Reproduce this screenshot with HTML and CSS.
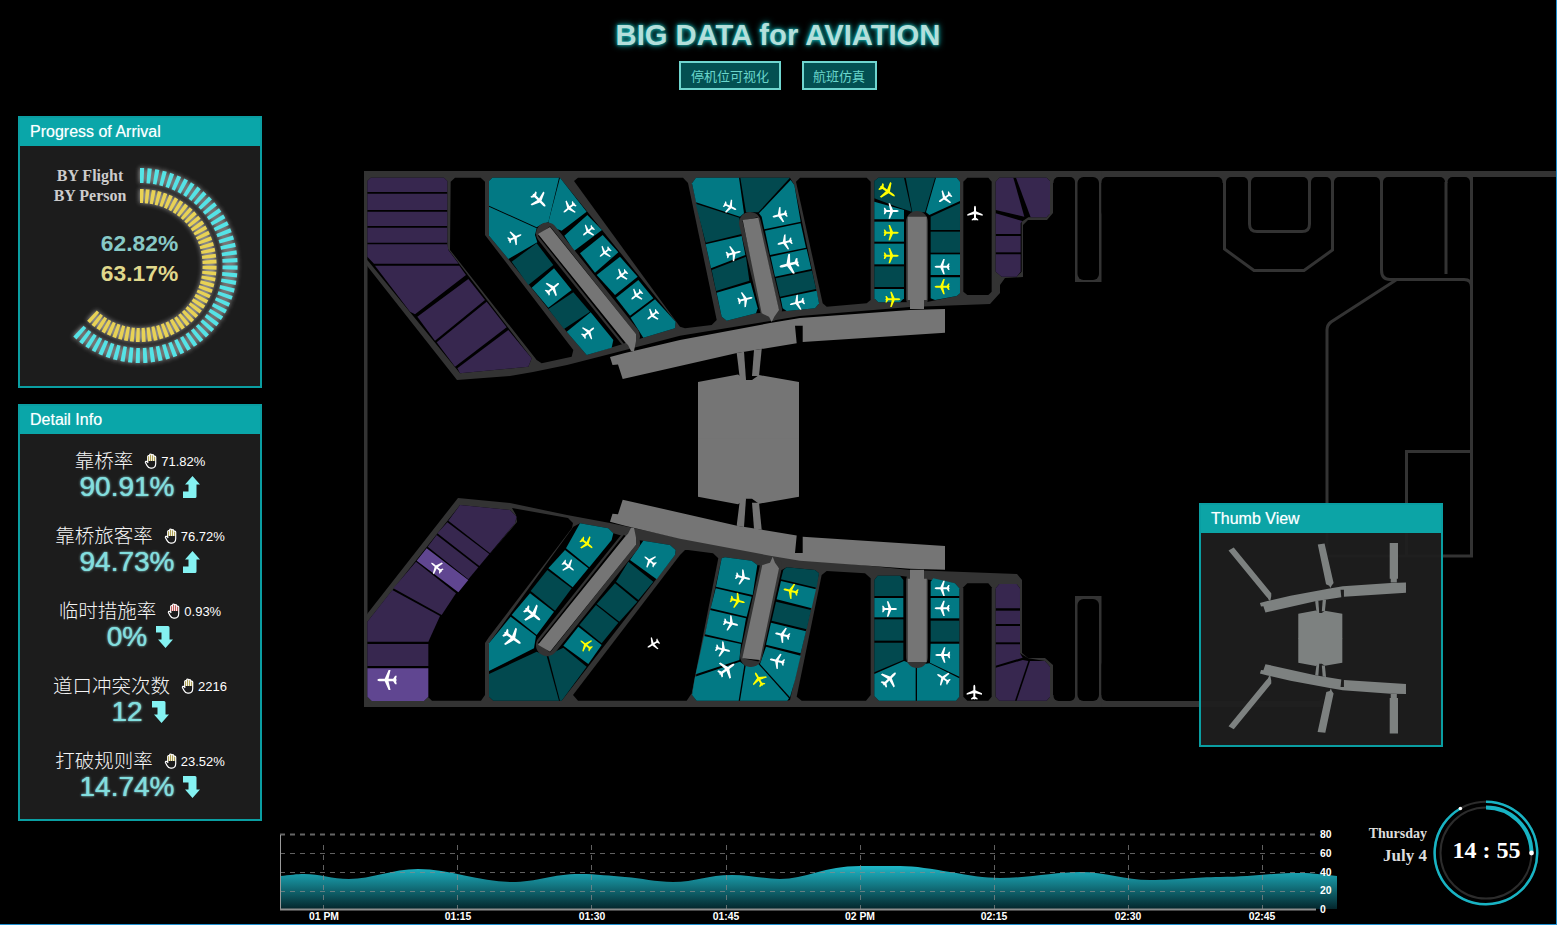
FILE: index.html
```html
<!DOCTYPE html>
<html>
<head>
  <meta charset="utf-8"/>
  <title>BIG DATA for AVIATION</title>
  <link rel="stylesheet" href="styles.css">
</head>
<body>

<svg class="defs" width="0" height="0">
  <defs>
    <path id="plane" d="M0-10C.9-10 1.3-8.4 1.3-6.5V-2.6L10 1.3V3.2L1.3 1.2V5.8L4.2 7.8V9.4L.8 8.7 0 9.8-.8 8.7-4.2 9.4V7.8L-1.3 5.8V1.2L-10 3.2V1.3L-1.3-2.6V-6.5C-1.3-8.4-.9-10 0-10Z"/>
    <path id="arrowUp" d="M9.5 0 17 8.5H13.5V20.5Q13.5 22 12 22H0V15.5H5.5V8.5H2Z"/>
    <path id="arrowDown" d="M9.5 22 17 13.5H13.5V1.5Q13.5 0 12 0H0V6.5H5.5V13.5H2Z"/>
    <g id="hand">
      <path class="hand-tips" d="M3.2 8V3.5a1 1 0 0 1 2 0V2a1 1 0 0 1 2 0v.6a1 1 0 0 1 2 0V4a1 1 0 0 1 2 0V8Z"/>
      <path class="hand-line" d="M3.2 9V3.5a1 1 0 0 1 2 0V8M5.2 7V2a1 1 0 0 1 2 0V8M7.2 8V2.6a1 1 0 0 1 2 0V8M9.2 8V4a1 1 0 0 1 2 0V10.5C11.2 13.5 9.8 15.2 7.4 15.2H6.2C4.4 15.2 3.4 14 2.6 12.6L1 9.8C.4 8.5 2.2 7.6 3.2 9.2L3.6 10"/>
    </g>

    <g id="half">
      <polygon points="610,357 625,353 680,340 770,323 800,318 910,310 945,309 945,332.7 802.7,342 802.7,325.7 795,325.7 796.7,343.3 737,353 622.7,379 618,364.5 612.5,365"/>
      <polygon points="736.7,353 744,351.7 746,380 740,380"/>
      <polygon points="754,350 761.7,349 759,376 752,376"/>
      <polygon points="698,382 738,374.5 746,380 752,380 759,375 799,382 799,440 698,440"/>
      <polygon points="538,234 550,227 636,334 636,341 634,351 631,351 628,345 625,342"/>
      <polygon points="907.7,216.7 926.7,216.7 926.7,300 924,300 924,309 910,309 910,300 907.7,300"/>
    </g>
    <g id="terminal">
      <use href="#half"/>
      <use href="#half" transform="matrix(1 0 0 -1 0 878.7)"/>
      <polygon points="742.7,220 758.3,217.7 779,310 774.3,316.7 771.7,322 769,316.7 761.7,313.3"/>
      <polygon points="762.3,565 770,562.7 772.7,556.7 775,562.7 779,568.3 760,660 742.3,658.3"/>
    </g>
  </defs>
</svg>

<div class="page">
  <header class="top">
    <h1 class="title">BIG DATA for AVIATION</h1>
    <nav class="tabs">
      <button class="tab">停机位可视化</button>
      <button class="tab">航班仿真</button>
    </nav>
  </header>

  <div class="main">
    <aside class="side">
      <section class="panel">
        <h2 class="panel-head">Progress of Arrival</h2>
        <svg class="gauge" viewBox="20 146 240 240">
          <path class="ring ring-flight" d="M140 175.5A90 90 0 1 1 76.4 329.1"/>
          <path class="ring ring-person" d="M140 196A69.5 69.5 0 1 1 90.9 314.6"/>
          <text class="gauge-label" x="90" y="181">BY Flight</text>
          <text class="gauge-label" x="90" y="201">BY Person</text>
          <text class="gauge-num num-flight" x="139.5" y="250.5">62.82%</text>
          <text class="gauge-num num-person" x="139.5" y="280.5">63.17%</text>
        </svg>
      </section>

      <section class="panel">
        <h2 class="panel-head">Detail Info</h2>
        <div class="stats">
          <div class="stat">
            <div class="stat-top"><span class="stat-name">靠桥率</span><svg class="hand" viewBox="0 0 13 16"><use href="#hand"/></svg><span class="stat-ref">71.82%</span></div>
            <div class="stat-big">90.91%<svg class="arrow" viewBox="0 0 17 22"><use href="#arrowUp"/></svg></div>
          </div>
          <div class="stat">
            <div class="stat-top"><span class="stat-name">靠桥旅客率</span><svg class="hand" viewBox="0 0 13 16"><use href="#hand"/></svg><span class="stat-ref">76.72%</span></div>
            <div class="stat-big">94.73%<svg class="arrow" viewBox="0 0 17 22"><use href="#arrowUp"/></svg></div>
          </div>
          <div class="stat">
            <div class="stat-top"><span class="stat-name">临时措施率</span><svg class="hand hand-red" viewBox="0 0 13 16"><use href="#hand"/></svg><span class="stat-ref">0.93%</span></div>
            <div class="stat-big">0%<svg class="arrow" viewBox="0 0 17 22"><use href="#arrowDown"/></svg></div>
          </div>
          <div class="stat">
            <div class="stat-top"><span class="stat-name">道口冲突次数</span><svg class="hand" viewBox="0 0 13 16"><use href="#hand"/></svg><span class="stat-ref">2216</span></div>
            <div class="stat-big">12<svg class="arrow" viewBox="0 0 17 22"><use href="#arrowDown"/></svg></div>
          </div>
          <div class="stat">
            <div class="stat-top"><span class="stat-name">打破规则率</span><svg class="hand" viewBox="0 0 13 16"><use href="#hand"/></svg><span class="stat-ref">23.52%</span></div>
            <div class="stat-big">14.74%<svg class="arrow" viewBox="0 0 17 22"><use href="#arrowDown"/></svg></div>
          </div>
        </div>
      </section>
    </aside>

    <section class="stage">
      <svg class="map" viewBox="364 168 1193 540">
        <!-- apron, top and bottom -->
        <g class="apron">
          <rect x="364" y="171" width="1193" height="6"/>
          <rect x="364" y="171" width="3.5" height="536"/>
          <rect x="364" y="701" width="959" height="6"/>
          <polygon points="364,171 1053,171 1053,213 1047,220 1028,220 1023,225 1023,277 1005,278 1000,285 1000,293 990,304 910,307 800,316 770,321 680,335.7 610,354 567,365 533,372 510,376 457,380 364,262"/>
          <polygon points="364,707 1053,707 1053,665 1045,658 1028,658 1022,653 1022,580 1017,574 910,570 793,558 680,538 610,523 567,515 510,503 458,498 364,618"/>
          <rect x="1053" y="171" width="420" height="12"/>
          <rect x="1053" y="695" width="270" height="12"/>
          <rect x="1075" y="171" width="26.5" height="111"/>
          <rect x="1075" y="596" width="26.5" height="111"/>
        </g>
        <g class="hole">
          <rect x="1053.5" y="177" width="21.5" height="40" rx="5"/>
          <rect x="1077.5" y="177" width="21.5" height="103" rx="6"/>
          <rect x="1101.5" y="177" width="121" height="40" rx="5"/>
          <rect x="1226" y="177" width="22" height="40" rx="5"/>
          <rect x="1251" y="177" width="57" height="40" rx="5"/>
          <rect x="1311" y="177" width="20" height="40" rx="5"/>
          <rect x="1334" y="177" width="46" height="40" rx="5"/>
          <rect x="1383" y="177" width="62" height="40" rx="5"/>
          <rect x="1447.5" y="177" width="22.5" height="40" rx="5"/>
          <rect x="1053.5" y="660" width="21.5" height="41" rx="5"/>
          <rect x="1077.5" y="599" width="21.5" height="102" rx="6"/>
          <rect x="1101.5" y="660" width="221.5" height="41" rx="5"/>
        </g>
        <path class="wall" d="M1224.5 182V249L1254 270.5H1304L1332.5 250V182"/>
        <path class="wall" d="M1249.5 182V224Q1249.5 231.5 1257 231.5H1302Q1309.5 231.5 1309.5 224V182"/>
        <path class="wall" d="M1381.5 182V270Q1381.5 279.5 1390 279.5H1464Q1471.5 279.5 1471.5 287"/>
        <path class="wall" d="M1446 182V274"/>
        <path class="wall" d="M1471.5 177V556H1327V330Q1327 325 1331 322L1396 280"/>
        <path class="wall" d="M1470 451.5H1406.5V556"/>

        <!-- holes that run across two crops -->
        <g class="hole">
          <polygon points="574,181 578,177.7 683,177.7 688,183 716.7,320 711.7,325 685,328.3 680,326.7 675,320"/>
          <polygon points="688,550 713,553.3 718.3,558.3 691.7,693.3 686.7,700.7 578,700.7 573,695 680,555 685,550"/>
          <polygon points="512,508 568,518 573,523 572,528 489,637 485,643 485,695 481,700.7 432,700.7 428,697 428,642 440,615 457,593 517,522 516,515"/>
        </g>

        <!-- west wing, top -->
        <g transform="translate(360 165) scale(.33333)">
          <polygon class="hole" points="272,50 285,38 362,38 375,50 375,210 640,555 635,575 545,595 530,585 270,255"/>
          <polygon class="hull" points="22,48 32,38 252,38 262,48 262,250 515,580 505,605 300,625 22,285"/>
          <g class="plum">
            <polygon points="22,48 32,38 252,38 262,48 262,81 22,81"/>
            <polygon points="22,86 262,86 262,135 22,135"/>
            <polygon points="22,140 262,140 262,183 22,183"/>
            <polygon points="22,188 262,188 262,233 22,233"/>
            <polygon points="22,238 262,238 265,255 296,296 42,296 22,275"/>
            <polygon points="45,302 298,302 318,330 165,448 150,440"/>
            <polygon points="172,455 325,342 375,405 225,527"/>
            <polygon points="230,532 380,410 440,487 285,605"/>
            <polygon points="292,610 445,495 515,580 505,605 300,625"/>
          </g>
          <polygon class="hull" points="387,48 397,38 600,38 947,470 945,490 850,518 680,570 620,500 445,282 387,212"/>
          <g class="teal">
            <polygon points="387,122 387,48 397,38 597,38 565,172 545,178 530,187"/>
            <polygon points="600,38 680,140 605,197 585,190 565,172"/>
            <polygon points="387,125 530,190 525,210 532,232 445,282 387,212"/>
            <polygon points="682,150 726,195 642,258 613,212"/>
            <polygon points="728,210 775,262 705,323 660,265"/>
            <polygon points="780,275 833,335 765,390 710,330"/>
            <polygon points="835,345 880,400 810,452 768,398"/>
            <polygon points="885,403 947,470 945,490 850,518 812,458"/>
            <polygon points="582,310 635,375 565,428 515,368"/>
            <polygon points="692,442 760,525 755,548 680,570 620,500"/>
          </g>
          <g class="deep">
            <polygon points="530,235 580,300 505,360 455,290"/>
            <polygon points="640,382 690,440 612,492 565,432"/>
          </g>
        </g>

        <!-- middle and east wing, top -->
        <g transform="translate(680 165) scale(.33333)">
          <polygon class="hole" points="348,50 360,38 560,38 572,50 572,405 560,415 440,425 428,415"/>
          <polygon class="hull" points="36,55 48,38 330,38 343,60 417,415 405,430 320,438 228,445 140,467 125,455"/>
          <g class="teal">
            <polygon points="36,55 48,38 177,38 192,145 180,155 48,112"/>
            <polygon points="332,45 343,60 362,170 253,193 245,155 237,145"/>
            <polygon points="77,238 185,213 196,270 93,310"/>
            <polygon points="110,383 212,353 233,430 228,445 140,467 125,455"/>
            <polygon points="255,197 362,175 378,248 270,270"/>
            <polygon points="272,275 380,252 394,312 285,335"/>
            <polygon points="302,400 410,377 417,415 405,430 320,438 308,430"/>
          </g>
          <g class="deep">
            <polygon points="181,38 330,38 235,142 198,142"/>
            <polygon points="47,116 178,158 185,207 77,233"/>
            <polygon points="95,315 198,275 208,347 108,378"/>
            <polygon points="287,340 396,317 408,372 300,395"/>
          </g>

          <polygon class="hull" points="583,48 595,38 830,38 840,50 840,385 830,393 745,410 660,412 595,412 583,400"/>
          <g class="deep">
            <polygon points="583,48 595,38 672,38 695,140 650,125 583,100"/>
            <polygon points="677,38 765,38 735,142 697,142"/>
            <polygon points="583,304 672,304 672,366 583,366"/>
            <polygon points="752,155 840,115 840,195 752,195"/>
            <polygon points="752,200 840,200 840,263 752,263"/>
          </g>
          <g class="teal">
            <polygon points="768,38 830,38 840,50 840,108 748,150 738,142"/>
            <polygon points="583,110 672,135 672,163 583,163"/>
            <polygon points="583,170 672,170 672,230 583,230"/>
            <polygon points="583,236 672,236 672,298 583,298"/>
            <polygon points="583,372 672,372 672,400 660,412 595,412 583,400"/>
            <polygon points="752,268 840,268 840,330 752,330"/>
            <polygon points="752,337 840,337 840,385 830,393 765,405 752,400"/>
          </g>

          <polygon class="hole" points="850,50 862,38 925,38 935,50 935,380 925,390 862,390 850,380"/>

          <polygon class="hull" points="947,50 958,38 1100,38 1110,48 1110,145 1100,157 1045,157 1025,170 1025,320 1010,335 965,335 947,320"/>
          <g class="plum">
            <polygon points="947,50 958,38 1000,38 1033,155 947,135"/>
            <polygon points="1008,38 1100,38 1110,48 1110,145 1100,157 1052,157"/>
            <polygon points="947,145 1027,168 1022,175 1022,207 947,207"/>
            <polygon points="947,213 1022,213 1022,262 947,262"/>
            <polygon points="947,268 1022,268 1022,320 1010,335 965,335 947,320"/>
          </g>
        </g>

        <!-- west wing, bottom -->
        <g transform="translate(360 490) scale(.33333)">
          <polygon class="hull" points="300,45 450,60 470,80 465,100 245,375 205,455 205,620 192,633 35,633 22,620 22,395"/>
          <g class="plum">
            <polygon points="300,45 450,60 470,80 465,100 390,190 265,92"/>
            <polygon points="262,97 388,192 358,228 232,130"/>
            <polygon points="230,135 355,232 325,268 203,170"/>
            <polygon points="168,215 288,310 245,375 100,295"/>
            <polygon points="97,300 240,378 205,455 22,455 22,395"/>
            <polygon points="22,462 205,462 205,528 22,528"/>
          </g>
          <g class="plum-hi">
            <polygon points="200,175 325,270 295,307 170,212"/>
            <polygon points="22,535 205,535 205,620 192,633 35,633 22,620"/>
          </g>
          <polygon class="hull" points="387,460 640,110 660,100 745,115 760,130 830,150 850,152 930,165 947,180 945,195 605,632 400,632 387,620"/>
          <g class="teal">
            <polygon points="660,100 745,115 760,130 755,150 688,232 618,175"/>
            <polygon points="615,180 685,235 638,292 565,235"/>
            <polygon points="510,310 582,365 530,435 455,375"/>
            <polygon points="452,380 528,438 522,475 387,543 387,460"/>
            <polygon points="850,152 930,165 947,180 945,195 890,268 810,210"/>
            <polygon points="655,410 725,465 685,522 610,467"/>
          </g>
          <g class="deep">
            <polygon points="562,240 635,295 585,362 512,303"/>
            <polygon points="387,552 530,485 560,497 597,632 400,632 387,620"/>
            <polygon points="565,497 575,490 610,473 680,530 605,632 600,632"/>
            <polygon points="805,215 880,275 835,330 768,275"/>
            <polygon points="765,280 832,335 778,395 710,342"/>
            <polygon points="708,345 775,398 725,460 658,405"/>
          </g>
        </g>

        <!-- middle and east wing, bottom -->
        <g transform="translate(680 490) scale(.33333)">
          <polygon class="hole" points="425,255 440,243 555,250 572,265 572,615 558,632 365,632 350,620"/>
          <polygon class="hull" points="125,205 135,202 215,212 232,225 305,240 320,232 405,240 417,250 330,630 322,632 50,632 36,615"/>
          <g class="teal">
            <polygon points="125,205 135,202 215,212 232,225 218,315 108,290"/>
            <polygon points="107,295 215,320 200,380 92,355"/>
            <polygon points="90,360 198,385 185,458 75,433"/>
            <polygon points="72,438 183,462 178,510 47,553"/>
            <polygon points="45,560 180,515 193,525 176,632 50,632 36,615"/>
            <polygon points="197,527 235,522 327,625 322,632 180,632"/>
            <polygon points="258,470 362,497 345,570 330,622 240,522"/>
            <polygon points="303,273 408,298 395,355 290,328"/>
            <polygon points="273,398 378,424 362,490 258,464"/>
          </g>
          <g class="deep">
            <polygon points="310,240 320,232 405,240 417,250 410,293 303,268"/>
            <polygon points="288,335 393,360 380,418 275,392"/>
          </g>

          <polygon class="hull" points="583,270 593,257 660,257 825,280 838,295 838,620 828,632 597,632 583,618"/>
          <g class="deep">
            <polygon points="583,270 593,257 660,257 670,270 670,318 583,318"/>
            <polygon points="583,388 670,388 670,452 583,452"/>
            <polygon points="583,458 670,458 670,510 583,547"/>
            <polygon points="752,392 838,392 838,455 752,455"/>
          </g>
          <g class="teal">
            <polygon points="583,324 670,324 670,382 583,382"/>
            <polygon points="583,552 672,513 707,525 707,632 597,632 583,618"/>
            <polygon points="711,525 748,520 838,565 838,620 828,632 711,632"/>
            <polygon points="752,275 760,265 825,280 838,295 838,318 752,318"/>
            <polygon points="752,324 838,324 838,385 752,385"/>
            <polygon points="752,461 838,461 838,560 750,518"/>
          </g>

          <polygon class="hole" points="850,292 862,280 925,280 935,292 935,620 925,632 862,632 850,620"/>

          <polygon class="hull" points="947,295 958,282 1010,282 1020,295 1020,490 1045,505 1095,513 1110,530 1110,620 1100,632 958,632 947,620"/>
          <g class="plum">
            <polygon points="947,295 958,282 1010,282 1020,295 1020,355 947,355"/>
            <polygon points="947,362 1020,362 1020,402 947,402"/>
            <polygon points="947,408 1020,408 1020,457 947,457"/>
            <polygon points="947,463 1020,463 1020,490 1028,503 947,527"/>
            <polygon points="947,533 1028,510 1045,513 1005,632 958,632 947,620"/>
            <polygon points="1050,513 1095,513 1110,530 1110,620 1100,632 1010,632"/>
          </g>
        </g>

        <!-- piers -->
        <g class="pier-ring">
          <line x1="547" y1="233.5" x2="629" y2="336"/>
          <line x1="547" y1="645.2" x2="629" y2="542.7"/>
          <line x1="750" y1="223" x2="771" y2="310"/>
          <line x1="771" y1="566" x2="751" y2="656"/>
          <line x1="917" y1="222" x2="917" y2="298"/>
          <line x1="917" y1="657" x2="917" y2="581"/>
        </g>
        <g class="pier-gap">
          <line x1="544" y1="231" x2="630" y2="339"/>
          <line x1="544" y1="647.7" x2="630" y2="539.7"/>
          <line x1="750" y1="219" x2="771" y2="311"/>
          <line x1="771" y1="566" x2="751" y2="660"/>
        </g>
        <use class="gray" href="#terminal"/>

        <!-- planes, top left -->
        <g class="planes" transform="translate(360 165) scale(.33333)">
          <use href="#plane" transform="translate(537 105) rotate(135) scale(2.7)"/>
          <use href="#plane" transform="translate(628 128) rotate(231) scale(2.2)"/>
          <use href="#plane" transform="translate(464 218) rotate(65) scale(2.2)"/>
          <use href="#plane" transform="translate(685 198) rotate(231) scale(2)"/>
          <use href="#plane" transform="translate(735 262) rotate(231) scale(2)"/>
          <use href="#plane" transform="translate(785 330) rotate(231) scale(2)"/>
          <use href="#plane" transform="translate(830 390) rotate(231) scale(2)"/>
          <use href="#plane" transform="translate(878 450) rotate(231) scale(2)"/>
          <use href="#plane" transform="translate(578 370) rotate(51) scale(2.4)"/>
          <use href="#plane" transform="translate(685 502) rotate(51) scale(2.2)"/>
        </g>
        <g class="planes" transform="translate(680 165) scale(.33333)">
          <use href="#plane" transform="translate(150 125) rotate(115) scale(2.1)"/>
          <use href="#plane" transform="translate(300 150) rotate(256) scale(2.3)"/>
          <use href="#plane" transform="translate(160 265) rotate(76) scale(2.3)"/>
          <use href="#plane" transform="translate(315 232) rotate(256) scale(2.3)"/>
          <use href="#plane" transform="translate(328 298) rotate(256) scale(3)"/>
          <use href="#plane" transform="translate(195 403) rotate(76) scale(2.3)"/>
          <use href="#plane" transform="translate(352 413) rotate(256) scale(2.3)"/>
          <use href="#plane" transform="translate(633 138) rotate(90) scale(2.3)"/>
          <use href="#plane" transform="translate(795 98) rotate(235) scale(2.2)"/>
          <use href="#plane" transform="translate(787 305) rotate(270) scale(2.3)"/>
          <use href="#plane" transform="translate(885 145) scale(2.3)"/>
          <g class="alert">
            <use href="#plane" transform="translate(622 78) rotate(125) scale(2.7)"/>
            <use href="#plane" transform="translate(633 203) rotate(90) scale(2.3)"/>
            <use href="#plane" transform="translate(633 272) rotate(90) scale(2.3)"/>
            <use href="#plane" transform="translate(638 403) rotate(90) scale(2.3)"/>
            <use href="#plane" transform="translate(787 365) rotate(270) scale(2.3)"/>
          </g>
        </g>

        <!-- planes, bottom -->
        <g class="planes" transform="translate(360 490) scale(.33333)">
          <use href="#plane" transform="translate(230 232) rotate(310) scale(2.1)"/>
          <use href="#plane" transform="translate(82 570) rotate(270) scale(3)"/>
          <use href="#plane" transform="translate(625 228) rotate(129) scale(2.1)"/>
          <use href="#plane" transform="translate(518 372) rotate(129) scale(2.9)"/>
          <use href="#plane" transform="translate(457 443) rotate(125) scale(3)"/>
          <use href="#plane" transform="translate(870 213) rotate(309) scale(2.1)"/>
          <use href="#plane" transform="translate(880 462) rotate(240) scale(2)"/>
          <g class="alert">
            <use href="#plane" transform="translate(680 160) rotate(129) scale(2.2)"/>
            <use href="#plane" transform="translate(678 465) rotate(309) scale(2.1)"/>
          </g>
        </g>
        <g class="planes" transform="translate(680 490) scale(.33333)">
          <use href="#plane" transform="translate(188 262) rotate(104) scale(2.3)"/>
          <use href="#plane" transform="translate(152 400) rotate(104) scale(2.3)"/>
          <use href="#plane" transform="translate(128 478) rotate(104) scale(2.3)"/>
          <use href="#plane" transform="translate(140 538) rotate(55) scale(2.8)"/>
          <use href="#plane" transform="translate(308 435) rotate(284) scale(2.3)"/>
          <use href="#plane" transform="translate(292 513) rotate(284) scale(2.3)"/>
          <use href="#plane" transform="translate(628 357) rotate(90) scale(2.3)"/>
          <use href="#plane" transform="translate(628 567) rotate(45) scale(2.7)"/>
          <use href="#plane" transform="translate(787 295) rotate(270) scale(2.3)"/>
          <use href="#plane" transform="translate(787 355) rotate(270) scale(2.3)"/>
          <use href="#plane" transform="translate(789 495) rotate(270) scale(2.3)"/>
          <use href="#plane" transform="translate(790 565) rotate(305) scale(2.2)"/>
          <use href="#plane" transform="translate(883 607) scale(2.3)"/>
          <g class="alert">
            <use href="#plane" transform="translate(172 332) rotate(104) scale(2.3)"/>
            <use href="#plane" transform="translate(333 303) rotate(284) scale(2.3)"/>
            <use href="#plane" transform="translate(237 568) rotate(330) scale(2.3)"/>
          </g>
        </g>
      </svg>

      <section class="panel thumb">
        <h2 class="panel-head">Thumb View</h2>
        <svg class="thumb-map" viewBox="1201 533 240 212">
          <use class="gray-soft" href="#terminal" transform="translate(1320.3 638.3) scale(.436 .428) translate(-748.5 -439.35)"/>
        </svg>
      </section>

      <footer class="bottom">
        <svg class="chart" viewBox="270 825 1080 100">
          <defs>
            <linearGradient id="areaFill" x1="0" y1="0" x2="0" y2="1">
              <stop offset="0" stop-color="#1fb8c8"/>
              <stop offset="1" stop-color="#04262c"/>
            </linearGradient>
          </defs>
          <path fill="url(#areaFill)" d="M280 876C290 875 297 874 304 874 320 874 332 879 349 879 372 879 392 869 418 869 450 869 480 882 511 882 538 882 552 874 580 874 597 874 610 876 625 877 642 878 655 882 673 882 695 882 708 875 732 875 750 875 765 879 780 879 805 879 825 866 860 866 875 866 890 866 900 866 930 866 970 878 1000 878 1030 878 1055 872 1080 872 1105 872 1125 880 1150 880 1180 880 1195 877 1220 877 1250 877 1270 873 1300 873 1315 873 1325 875 1337 876V909H280Z"/>
          <g class="grid">
            <line class="grid-top" x1="280" y1="834.5" x2="1316" y2="834.5"/>
            <line x1="280" y1="853.5" x2="1316" y2="853.5"/>
            <line x1="280" y1="872.5" x2="1316" y2="872.5"/>
            <line x1="280" y1="891.5" x2="1316" y2="891.5"/>
            <line x1="323.5" y1="845" x2="323.5" y2="909"/>
            <line x1="457.5" y1="845" x2="457.5" y2="909"/>
            <line x1="591.5" y1="845" x2="591.5" y2="909"/>
            <line x1="726.5" y1="845" x2="726.5" y2="909"/>
            <line x1="860.5" y1="845" x2="860.5" y2="909"/>
            <line x1="994.5" y1="845" x2="994.5" y2="909"/>
            <line x1="1128.5" y1="845" x2="1128.5" y2="909"/>
            <line x1="1262.5" y1="845" x2="1262.5" y2="909"/>
          </g>
          <path class="axis" d="M280.5 835V909"/>
          <path class="axis axis-x" d="M280 909.5H1316"/>
          <g class="ticks-x">
            <text x="324" y="920">01 PM</text>
            <text x="458" y="920">01:15</text>
            <text x="592" y="920">01:30</text>
            <text x="726" y="920">01:45</text>
            <text x="860" y="920">02 PM</text>
            <text x="994" y="920">02:15</text>
            <text x="1128" y="920">02:30</text>
            <text x="1262" y="920">02:45</text>
          </g>
          <g class="ticks-y">
            <text x="1320" y="838">80</text>
            <text x="1320" y="857">60</text>
            <text x="1320" y="876">40</text>
            <text x="1320" y="894">20</text>
            <text x="1320" y="913">0</text>
          </g>
        </svg>
        <div class="date">
          <div class="date-day">Thursday</div>
          <div class="date-num">July 4</div>
        </div>
        <svg class="clock" viewBox="0 0 110 110">
          <circle class="clock-back" cx="55" cy="55" r="51.3"/>
          <circle class="clock-back2" cx="55" cy="55" r="45.5"/>
          <path class="clock-min" d="M55 3.7A51.3 51.3 0 1 1 29.4 10.5"/>
          <path class="clock-hour" d="M55 9.5A45.5 45.5 0 0 1 100.5 53"/>
          <circle class="clock-dot" cx="29.4" cy="10.5" r="1.8"/>
          <circle class="clock-dot" cx="100.5" cy="55" r="2.4"/>
          <text class="clock-text" x="55.5" y="59.5">14 : 55</text>
        </svg>
      </footer>
    </section>
  </div>
</div>

</body>
</html>
```

FILE: styles.css
```css
html, body {
  margin: 0;
  background-color: #000;
}
body {
  overflow: hidden;
  font-family: "Liberation Sans", "Noto Sans CJK SC", sans-serif;
}
.defs {
  position: absolute;
}
.page {
  box-sizing: border-box;
  width: 1557px;
  height: 925px;
  border-right: 1px solid #1f8fd0;
  border-bottom: 1px solid #1f8fd0;
  overflow: hidden;
}

/* header */
.top {
  height: 116px;
  text-align: center;
}
.title {
  margin: 0;
  padding-top: 18px;
  height: 43px;
  line-height: 35px;
  font-size: 29.2px;
  font-weight: bold;
  color: #b4dfdb;
  text-shadow: 0 0 6px #12b9b9, 0 0 3px #12b9b9;
}
.tabs {
  display: flex;
  justify-content: center;
  gap: 21px;
}
.tab {
  box-sizing: border-box;
  height: 29px;
  padding: 0 9.5px;
  border: 2px solid #6fd5cf;
  background-color: #035052;
  color: #6ad6cc;
  font-family: "Noto Sans CJK SC", sans-serif;
  font-size: 13px;
}

.main {
  display: grid;
  grid-template-columns: 262px 1fr;
}
.side {
  padding-left: 18px;
  display: flex;
  flex-direction: column;
  gap: 16px;
}

/* panels */
.panel {
  box-sizing: border-box;
  width: 244px;
  border: 2px solid #0a9ea2;
  background-color: #1c1c1c;
}
.panel-head {
  margin: 0;
  height: 28px;
  padding-left: 10px;
  line-height: 27px;
  font-size: 16px;
  font-weight: normal;
  color: #fff;
  background-color: #0aa6a9;
  text-shadow: 0 0 1px rgba(204, 255, 255, .6);
}

/* gauge */
.gauge {
  display: block;
  width: 240px;
  height: 240px;
}
.ring {
  fill: none;
  stroke-width: 15;
  filter: drop-shadow(0 0 2.5px rgba(255, 255, 255, .75));
}
.ring-flight {
  stroke: #55e3e6;
  stroke-dasharray: 3.9 3.17;
}
.ring-person {
  stroke: #e8d255;
  stroke-width: 14;
  stroke-dasharray: 3.5 1.96;
}
.gauge-label {
  font-family: "Liberation Serif", serif;
  font-size: 16px;
  font-weight: bold;
  fill: #ccc;
  text-anchor: middle;
}
.gauge-num {
  font-size: 22.8px;
  font-weight: bold;
  text-anchor: middle;
}
.num-flight {
  fill: #87c9c6;
}
.num-person {
  fill: #e0d88c;
}

/* detail list */
.stats {
  padding: 11px 0 18px;
  display: flex;
  flex-direction: column;
  gap: 19px;
}
.stat {
  text-align: center;
}
.stat-top {
  height: 28px;
  display: flex;
  align-items: center;
  justify-content: center;
  color: #fff;
}
.stat-name {
  font-family: "Noto Sans CJK SC", sans-serif;
  font-size: 19.5px;
  font-weight: 300;
  color: #f4f4f4;
}
.hand {
  width: 14px;
  height: 16px;
  margin: 4px 3px 0 11px;
  color: #8a7a10;
}
.hand-red {
  color: #a01414;
}
.hand-tips {
  fill: currentColor;
}
.hand-line {
  fill: none;
  stroke: #fff;
  stroke-width: 1.2;
}
.stat-ref {
  margin-top: 4px;
  font-size: 13px;
}
.stat-big {
  height: 28px;
  display: flex;
  align-items: center;
  justify-content: center;
  font-size: 28px;
  color: #82dede;
  text-shadow: 0 0 1px #82dede, 0 0 3px rgba(160, 240, 240, .7);
}
.arrow {
  width: 17px;
  height: 22px;
  margin-left: 9px;
  fill: #84f2f2;
}

/* map */
.stage {
  position: relative;
}
.map {
  display: block;
  width: 1193px;
  height: 540px;
  margin: 52px 0 0 102px;
}
.apron rect, .apron polygon {
  fill: #333;
}
.hole, .hole rect, .hole polygon, .hull {
  fill: #000;
}
.wall {
  fill: none;
  stroke: #333;
  stroke-width: 3;
}
.teal {
  fill: #027984;
}
.deep {
  fill: #02494f;
}
.plum {
  fill: #37274f;
}
.plum-hi {
  fill: #604691;
}
.pier-ring {
  stroke: #333;
  stroke-width: 22;
  stroke-linecap: round;
}
.pier-gap {
  stroke: #000;
  stroke-width: 15.5;
}
.gray {
  fill: #757575;
}
.planes {
  fill: #fff;
}
.alert {
  fill: #ff0;
}

/* thumb view sits over the map */
.thumb {
  position: absolute;
  left: 937px;
  top: 387px;
  height: 244px;
  background-color: rgba(30, 30, 30, .93);
}
.thumb .panel-head {
  background-color: rgba(11, 170, 172, .96);
}
.thumb-map {
  display: block;
  width: 240px;
  height: 212px;
}
.gray-soft {
  fill: #7d8180;
}

/* chart and clock */
.bottom {
  display: flex;
  align-items: flex-start;
  margin-top: 117px;
  padding-left: 8px;
}
.chart {
  display: block;
  flex: none;
  width: 1080px;
  height: 100px;
}
.grid line {
  stroke: #8a8a8a;
  stroke-dasharray: 5 5;
  stroke-opacity: .7;
}
.grid .grid-top {
  stroke: #666;
  stroke-width: 2;
  stroke-opacity: 1;
}
.axis {
  fill: none;
  stroke: #9a9a9a;
  stroke-width: 1;
}
.axis-x {
  stroke: #8d8d8d;
  stroke-width: 2;
}
.ticks-x text, .ticks-y text {
  font-size: 10.4px;
  font-weight: bold;
  fill: #fff;
}
.ticks-x text {
  text-anchor: middle;
}
.date {
  width: 77px;
  margin-top: 1px;
  text-align: right;
  font-family: "Liberation Serif", serif;
  font-weight: bold;
  color: #ddd;
}
.date-day {
  font-size: 14px;
  line-height: 16px;
}
.date-num {
  margin-top: 4px;
  font-size: 17px;
  line-height: 20px;
}
.clock {
  flex: none;
  width: 110px;
  height: 110px;
  margin: -27px 0 0 4px;
}
.clock-back, .clock-back2 {
  fill: none;
  stroke: #2c2c2c;
  stroke-width: 2;
}
.clock-min {
  fill: none;
  stroke: #18b4c4;
  stroke-width: 2.5;
}
.clock-hour {
  fill: none;
  stroke: #18b4c4;
  stroke-width: 4;
}
.clock-dot {
  fill: #fff;
}
.clock-text {
  font-family: "Liberation Serif", serif;
  font-size: 24px;
  font-weight: bold;
  fill: #fff;
  text-anchor: middle;
}
```
